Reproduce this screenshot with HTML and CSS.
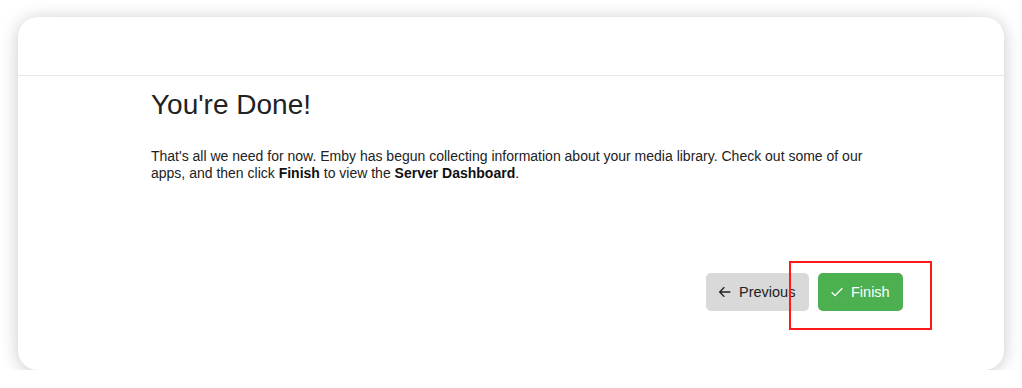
FILE: index.html
```html
<!DOCTYPE html>
<html>
<head>
<meta charset="utf-8">
<link rel="stylesheet" href="styles.css">
</head>
<body>
<div class="card">
  <div class="card-header"></div>
  <div class="card-body">
    <h1 class="title">You're Done!</h1>
    <p class="text">That's all we need for now. Emby has begun collecting information about your media library. Check out some of our apps, and then click <b>Finish</b> to view the <b>Server Dashboard</b>.</p>
    <div class="actions">
      <button class="btn btn-prev">
        <svg width="16" height="16" viewBox="0 0 24 24"><path d="M20 12H5M11 5l-7 7 7 7" fill="none" stroke="#222" stroke-width="2"/></svg>
        <span>Previous</span>
      </button>
      <button class="btn btn-finish">
        <svg width="16" height="16" viewBox="0 0 24 24"><path d="M4 12.5l5 5L20 6.5" fill="none" stroke="#fff" stroke-width="2"/></svg>
        <span>Finish</span>
      </button>
      <div class="highlight"></div>
    </div>
  </div>
</div>
</body>
</html>
```

FILE: styles.css
```css
html, body {
  margin: 0;
  padding: 0;
  background: #fff;
}
body {
  padding: 17px 18px 0 18px;
  font-family: "Liberation Sans", Arial, sans-serif;
  color: #222;
}
.card {
  width: 986px;
  height: 353px;
  background: #fff;
  border-radius: 20px;
  box-shadow: 0 2px 18px rgba(0,0,0,0.22);
  box-sizing: border-box;
}
.card-header {
  height: 58px;
  border-bottom: 1px solid #e8e8e8;
}
.card-body {
  padding: 0 101px 0 133px;
}
.title {
  margin: 12px 0 0 0;
  font-size: 28px;
  font-weight: normal;
  line-height: 34px;
  color: #222;
}
.text {
  margin: 26px 0 0 0;
  font-size: 14px;
  line-height: 16.5px;
  max-width: 730px;
  color: #222;
}
.text b {
  font-weight: bold;
  color: #111;
}
.actions {
  position: relative;
  display: flex;
  justify-content: flex-end;
  gap: 9px;
  margin-top: 92px;
}
.btn {
  display: flex;
  align-items: center;
  gap: 6px;
  height: 38px;
  border: none;
  border-radius: 5px;
  font-family: "Liberation Sans", Arial, sans-serif;
  font-size: 14.5px;
  padding: 0 13px 0 11px;
  cursor: pointer;
}
.btn-prev {
  background: #d9d9d9;
  color: #222;
  width: 103px;
}
.btn-finish {
  background: #4caf50;
  color: #fff;
  width: 85px;
}
.highlight {
  position: absolute;
  right: -29px;
  top: -12px;
  width: 143px;
  height: 69px;
  border: 2px solid #ff1a1a;
  box-sizing: border-box;
  pointer-events: none;
}
```
